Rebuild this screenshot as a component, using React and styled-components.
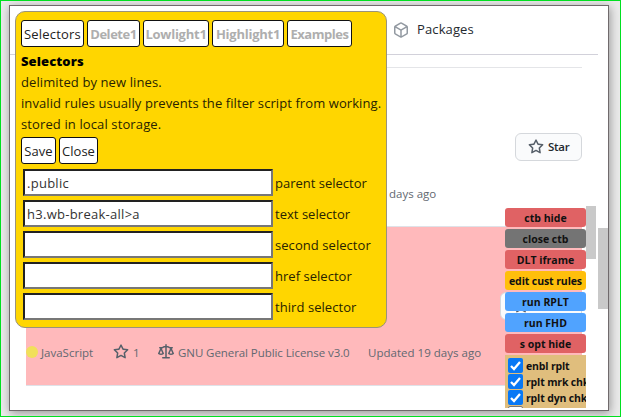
import React from 'react';
import styled, { createGlobalStyle } from 'styled-components';

const Global = createGlobalStyle`
  *, *::before, *::after { box-sizing: border-box; }
  body { margin: 0; font-family: "Open Sans", "Noto Sans", sans-serif; }
`;

const Desktop = styled.div`
  width: 621px;
  height: 417px;
  padding: 4px 11px 5px 8px;
  border: 1px solid #00e020;
  background: #eaeaea;
  overflow: hidden;
`;

const Window = styled.main`
  position: relative;
  height: 406px;
  border: 1px solid #706a6c;
  background: #fff;
  box-shadow: 1px 2px 9px rgba(0, 0, 0, 0.36);
  overflow: hidden;
`;

const Nav = styled.nav`
  display: flex;
  align-items: center;
  width: 588px;
  height: 49px;
  padding-left: 383px;
  border-bottom: 1px solid #d2d1da;
`;

const NavItem = styled.span`
  display: flex;
  align-items: center;
  gap: 8px;
  color: #24292f;
  font-size: 13px;
  line-height: 18px;
  letter-spacing: 0.12px;
`;

const NavLabel = styled.span`
  padding-bottom: 2px;
`;

const RepoList = styled.section`
  width: 556px;
  margin: 12px 0 0 16px;
  border-top: 1px solid #e4e5e8;
`;

const Repo = styled.article`
  display: flex;
  flex-direction: column;
  justify-content: space-between;
  align-items: flex-end;
  height: ${(p) => p.$height}px;
  padding-top: 65px;
  border-bottom: 1px solid #dfe2e8;
  background: ${(p) => (p.$marked ? '#ffb9bb' : '#fff')};
`;

const StarButton = styled.button`
  display: flex;
  align-items: center;
  gap: 4px;
  width: 67px;
  height: 28px;
  flex-shrink: 0;
  padding: 0 0 1px 12px;
  border: 1px solid #d5d8dc;
  border-radius: 6px;
  background: #fafbfc;
  color: #24292f;
  font: 600 11.5px "Open Sans", sans-serif;
  letter-spacing: -0.3px;
`;

const WideStarButton = styled(StarButton)`
  width: 82px;
`;

const Meta = styled.footer`
  display: flex;
  align-items: center;
  width: 100%;
  height: 16px;
  margin-bottom: ${(p) => p.$bottom}px;
  color: #626870;
  font-size: 11.5px;
  white-space: nowrap;
`;

const MetaItem = styled.span`
  display: flex;
  align-items: center;
  gap: ${(p) => p.$gap || 4}px;
  width: ${(p) => p.$width || 'auto'};
  letter-spacing: ${(p) => p.$spacing || 0}px;
`;

const UpdatedAt = styled(MetaItem)`
  margin-left: ${(p) => p.$left}px;
`;

const LanguageDot = styled.i`
  width: 12px;
  height: 12px;
  border-radius: 50%;
  background: #f1e05a;
`;

const Dialog = styled.section`
  position: absolute;
  left: 5px;
  top: 5px;
  width: 372px;
  height: 317px;
  padding: 8px 5px;
  border: 1px solid #99937b;
  border-radius: 10px;
  background: #ffd600;
  color: #282300;
  font-size: 13px;
  line-height: 21px;
`;

const ButtonRow = styled.div`
  display: flex;
  gap: 3px;
`;

const DialogButton = styled.button`
  display: flex;
  align-items: center;
  justify-content: center;
  width: ${(p) => p.$width}px;
  height: 27px;
  padding: 0;
  border: 1px solid #111;
  border-radius: 3px;
  background: #fff;
  color: ${(p) => (p.$muted ? '#aeaeae' : '#222')};
  font: ${(p) => (p.$muted ? 700 : 400)} 13px "Open Sans", sans-serif;
  letter-spacing: ${(p) => p.$spacing || 0}px;
`;

const Title = styled.h2`
  margin: 4px 0 0;
  color: #000;
  font-size: 13px;
  font-weight: 800;
  line-height: 21px;
  letter-spacing: 0.1px;
`;

const Hint = styled.p`
  margin: 0;
  letter-spacing: ${(p) => p.$spacing || 0}px;
  white-space: nowrap;
`;

const Hints = styled.div`
  padding-bottom: 2px;
`;

const Fields = styled.div`
  display: grid;
  gap: 4px;
  margin: 5px 0 0 2px;
`;

const Field = styled.label`
  display: flex;
  align-items: center;
  gap: 2px;
  height: 27px;
  letter-spacing: ${(p) => p.$spacing || 0}px;
`;

const FieldName = styled.span`
  padding-top: 2px;
`;

const Input = styled.input`
  width: 250px;
  height: 27px;
  padding: 1px 2px;
  border: 2px solid;
  border-color: #222 #777 #777 #222;
  border-radius: 0;
  background: #fff;
  color: #333;
  font: 13px "Open Sans", sans-serif;
  letter-spacing: 0.27px;
  outline: 0;
`;

const Tools = styled.aside`
  position: absolute;
  left: 495px;
  top: 202px;
  display: flex;
  flex-direction: column;
  gap: 2px;
  width: 81px;
  height: 200px;
  overflow: hidden;
`;

const ToolButton = styled.button`
  width: 81px;
  height: 19px;
  flex-shrink: 0;
  padding: 1px 0 0;
  border: 0;
  border-radius: 3px;
  background: ${(p) => p.$color};
  color: #111;
  font: 700 10.5px/18px "Open Sans", sans-serif;
  letter-spacing: ${(p) => p.$spacing || 0}px;
  white-space: nowrap;
`;

const Options = styled.div`
  height: 53px;
  padding: 3px 0 0 3px;
  background: #e0be7d;
  overflow: hidden;
`;

const Option = styled.label`
  display: flex;
  gap: 3px;
  height: 16px;
  color: #111;
  font-size: 10.5px;
  font-weight: 700;
  line-height: 16px;
  letter-spacing: -0.15px;
  white-space: nowrap;
`;

const Check = styled.span`
  display: flex;
  width: 15px;
  height: 15px;
  flex-shrink: 0;
  border: ${(p) => (p.$on ? 0 : '1px solid #777')};
  border-radius: 2px;
  background: ${(p) => (p.$on ? '#0878f5' : '#fff')};
`;

const ScrollThumb = styled.div`
  position: absolute;
  left: ${(p) => p.$left}px;
  top: ${(p) => p.$top}px;
  width: 10px;
  height: ${(p) => p.$height}px;
  background: #c9c9c9;
`;

const Star = () => (
  <svg width="16" height="16" viewBox="0 0 16 16" fill="#57606a">
    <path fillRule="evenodd" d="M8 .25a.75.75 0 01.673.418l1.882 3.815 4.21.612a.75.75 0 01.416 1.279l-3.046 2.97.719 4.192a.75.75 0 01-1.088.791L8 12.347l-3.766 1.98a.75.75 0 01-1.088-.79l.72-4.194L.818 6.374a.75.75 0 01.416-1.28l4.21-.611L7.327.668A.75.75 0 018 .25zm0 2.445L6.615 5.5a.75.75 0 01-.564.41l-3.097.45 2.24 2.184a.75.75 0 01.216.664l-.528 3.084 2.769-1.456a.75.75 0 01.698 0l2.77 1.456-.53-3.084a.75.75 0 01.216-.664l2.24-2.183-3.096-.45a.75.75 0 01-.564-.41L8 2.694z" />
  </svg>
);

const Package = () => (
  <svg width="16" height="16" viewBox="0 0 16 16" fill="#9299a1">
    <path fillRule="evenodd" d="M8.878.392a1.75 1.75 0 00-1.756 0l-5.25 3.045A1.75 1.75 0 001 4.951v6.098c0 .624.332 1.2.872 1.514l5.25 3.045a1.75 1.75 0 001.756 0l5.25-3.045c.54-.313.872-.89.872-1.514V4.951c0-.624-.332-1.2-.872-1.514L8.878.392zM7.875 1.69a.25.25 0 01.25 0l4.63 2.685L8 7.133 3.245 4.375l4.63-2.685zM2.5 5.677v5.372c0 .09.047.171.125.216l4.625 2.683V8.432L2.5 5.677zm6.25 8.271l4.625-2.683a.25.25 0 00.125-.216V5.677L8.75 8.432v5.516z" />
  </svg>
);

const Law = () => (
  <svg width="16" height="16" viewBox="0 0 16 16" fill="#57606a">
    <path fillRule="evenodd" d="M8.75.75a.75.75 0 00-1.5 0V2h-.984c-.305 0-.604.08-.869.23l-1.288.737A.25.25 0 013.984 3H1.75a.75.75 0 000 1.5h.428L.066 9.192a.75.75 0 00.154.838l.53-.53-.53.53v.001l.002.002.002.002.006.006.016.015.045.04a3.514 3.514 0 00.686.45A4.492 4.492 0 003 11c.88 0 1.556-.22 2.023-.454a3.515 3.515 0 00.686-.45l.045-.04.016-.015.006-.006.002-.002.001-.002L5.25 9.5l.53.53a.75.75 0 00.154-.838L3.822 4.5h.162c.305 0 .604-.08.869-.23l1.289-.737a.25.25 0 01.124-.033h.984V13h-2.5a.75.75 0 000 1.5h6.5a.75.75 0 000-1.5h-2.5V3.5h.984a.25.25 0 01.124.033l1.29.736c.264.152.563.231.868.231h.162l-2.112 4.692a.75.75 0 00.154.838l.53-.53-.53.53v.001l.002.002.002.002.006.006.016.015.045.04a3.517 3.517 0 00.686.45A4.492 4.492 0 0013 11c.88 0 1.556-.22 2.023-.454a3.512 3.512 0 00.686-.45l.045-.04.01-.01.006-.005.006-.006.002-.002.001-.002-.529-.531.53.53a.75.75 0 00.154-.838L13.823 4.5h.427a.75.75 0 000-1.5h-2.234a.25.25 0 01-.124-.033l-1.29-.736A1.75 1.75 0 009.735 2H8.75V.75zM1.695 9.227c.285.135.718.273 1.305.273s1.02-.138 1.305-.273L3 6.327l-1.305 2.9zm10 0c.285.135.718.273 1.305.273s1.02-.138 1.305-.273L13 6.327l-1.305 2.9z" />
  </svg>
);

const Tick = () => (
  <svg width="15" height="15" viewBox="0 0 15 15" fill="none" stroke="#fff" strokeWidth="2.3">
    <path d="M3 8l3 3 6-7" />
  </svg>
);

const tabs = [
  { label: 'Selectors', width: 63, spacing: 0.2 },
  { label: 'Delete1', width: 53, muted: true, spacing: -0.45 },
  { label: 'Lowlight1', width: 66, muted: true, spacing: -0.25 },
  { label: 'Highlight1', width: 72, muted: true, spacing: -0.25 },
  { label: 'Examples', width: 65, muted: true, spacing: -0.45 },
];

const fields = [
  { label: 'parent selector', value: '.public' },
  { label: 'text selector', value: 'h3.wb-break-all>a', spacing: 0.03 },
  { label: 'second selector', value: '', spacing: 0.06 },
  { label: 'href selector', value: '', spacing: 0.03 },
  { label: 'third selector', value: '', spacing: 0.06 },
];

const tools = [
  { label: 'ctb hide', color: '#e06264' },
  { label: 'close ctb', color: '#747474' },
  { label: 'DLT iframe', color: '#e06264' },
  { label: 'edit cust rules', color: '#ffbf0b', spacing: -0.1 },
  { label: 'run RPLT', color: '#50a3ff' },
  { label: 'run FHD', color: '#50a3ff' },
  { label: 's opt hide', color: '#e06264' },
];

export default function App() {
  return (
    <>
      <Global />
      <Desktop>
        <Window>
          <Nav><NavItem><Package /><NavLabel>Packages</NavLabel></NavItem></Nav>
          <RepoList>
            <Repo $height={159}>
              <StarButton><Star />Star</StarButton>
              <Meta $bottom={25}>
                <UpdatedAt $left={363}>days ago</UpdatedAt>
              </Meta>
            </Repo>
            <Repo $height={159} $marked>
              <WideStarButton aria-label="Star"><Star /></WideStarButton>
              <Meta $bottom={25}>
                <MetaItem $width="87px" $gap={3}><LanguageDot />JavaScript</MetaItem>
                <MetaItem $width="45px"><Star />1</MetaItem>
                <MetaItem $width="210px" $spacing={-0.07}><Law />GNU General Public License v3.0</MetaItem>
                <MetaItem $spacing={0.02}>Updated 19 days ago</MetaItem>
              </Meta>
            </Repo>
          </RepoList>

          <Dialog>
            <ButtonRow>
              {tabs.map((t) => (
                <DialogButton key={t.label} $width={t.width} $muted={t.muted} $spacing={t.spacing}>{t.label}</DialogButton>
              ))}
            </ButtonRow>
            <Title>Selectors</Title>
            <Hints>
              <Hint $spacing={0.1}>delimited by new lines.</Hint>
              <Hint $spacing={0.08}>invalid rules usually prevents the filter script from working.</Hint>
              <Hint $spacing={0.12}>stored in local storage.</Hint>
            </Hints>
            <ButtonRow>
              <DialogButton $width={35} $spacing={0.1}>Save</DialogButton>
              <DialogButton $width={39}>Close</DialogButton>
            </ButtonRow>
            <Fields>
              {fields.map((f) => (
                <Field key={f.label} $spacing={f.spacing}>
                  <Input defaultValue={f.value} />
                  <FieldName>{f.label}</FieldName>
                </Field>
              ))}
            </Fields>
          </Dialog>

          <Tools>
            {tools.map((t) => (
              <ToolButton key={t.label} $color={t.color} $spacing={t.spacing}>{t.label}</ToolButton>
            ))}
            <Options>
              {['enbl rplt', 'rplt mrk chk', 'rplt dyn chk'].map((o) => (
                <Option key={o}><Check $on><Tick /></Check>{o}</Option>
              ))}
              <Option><Check /></Option>
            </Options>
          </Tools>
          <ScrollThumb $left={576} $top={200} $height={53} />
          <ScrollThumb $left={588} $top={222} $height={81} />
        </Window>
      </Desktop>
    </>
  );
}
